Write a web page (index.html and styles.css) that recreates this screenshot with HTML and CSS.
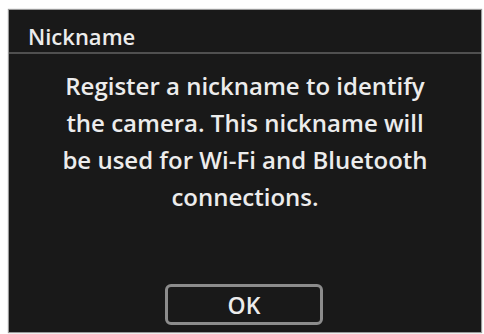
FILE: index.html
```html
<!DOCTYPE html>
<html>
<head>
<meta charset="utf-8">
<link rel="stylesheet" href="styles.css">
</head>
<body>
<div class="screen">
  <div class="header">Nickname</div>
  <p class="message">Register a nickname to identify<br>the camera. This nickname will<br>be used for Wi-Fi and Bluetooth<br>connections.</p>
  <div class="actions"><div class="ok">OK</div></div>
</div>
</body>
</html>
```
FILE: styles.css
```css
html, body { margin: 0; padding: 0; background: #ffffff; }
body { width: 484px; height: 334px; overflow: hidden; }
.screen {
  margin: 10px 0 0 9px;
  width: 472px;
  height: 322px;
  background: #191919;
  box-shadow: 0 0 1px 1px #9a9a9a;
  display: flex;
  flex-direction: column;
  font-family: "Open Sans", "DejaVu Sans", sans-serif;
  font-weight: 600;
  color: #ececec;
}
.header {
  height: 44px;
  box-sizing: border-box;
  padding: 12px 0 0 19px;
  font-size: 22px;
  line-height: 28px;
  border-bottom: 2px solid #505050;
}
.message {
  margin: 13px 0 0;
  text-align: center;
  font-size: 24px;
  line-height: 37px;
}
.actions {
  margin-top: auto;
  margin-bottom: 7px;
  display: flex;
  justify-content: center;
}
.ok {
  width: 158px;
  height: 41px;
  box-sizing: border-box;
  border: 3px solid #8c8c8c;
  border-radius: 6px;
  display: flex;
  align-items: center;
  justify-content: center;
  font-size: 23px;
  margin-left: -2px;
}
```
